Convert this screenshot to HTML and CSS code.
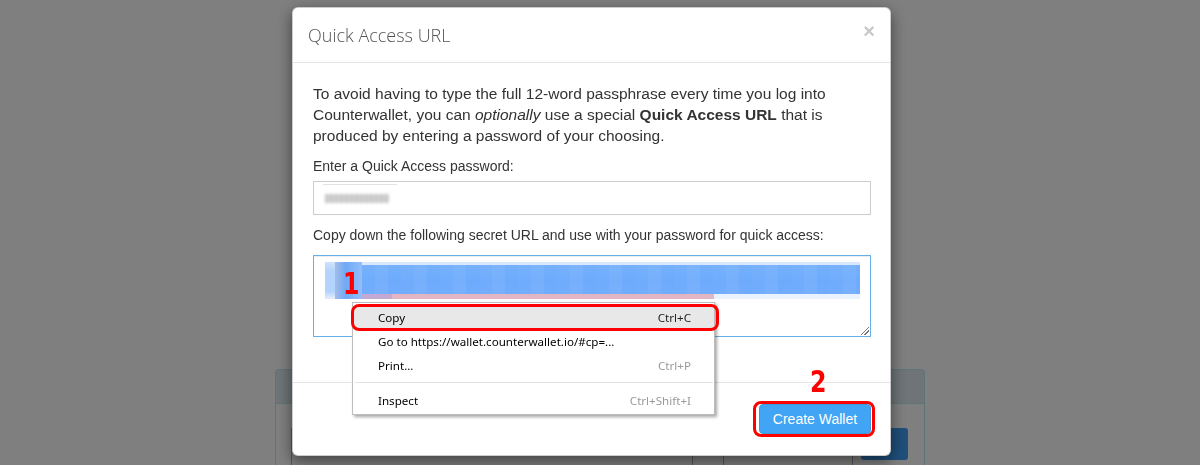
FILE: index.html
```html
<!DOCTYPE html>
<html>
<head>
<meta charset="utf-8">
<title>Quick Access URL</title>
<link rel="stylesheet" href="styles.css">
</head>
<body>
<div class="page">
  <div class="panel">
    <div class="panel-heading"></div>
    <div class="panel-body">
      <div class="bg-input"></div>
      <div class="bg-input bg-input-small"></div>
      <div class="bg-btn"></div>
    </div>
  </div>
</div>

<div class="backdrop"></div>

<div class="modal">
  <div class="modal-header">
    <h4 class="modal-title">Quick Access URL</h4>
    <span class="close">×</span>
  </div>
  <div class="modal-body">
    <p class="intro">To avoid having to type the full 12-word passphrase every time you log into Counterwallet, you can <em>optionally</em> use a special <strong>Quick Access URL</strong> that is produced by entering a password of your choosing.</p>
    <label class="label">Enter a Quick Access password:</label>
    <div class="input">
      <span class="blur-line"></span>
      <span class="blur-dots"></span>
    </div>
    <label class="label label-2">Copy down the following secret URL and use with your password for quick access:</label>
    <div class="textarea">
      <div class="sel">
        <div class="sel-left">
          <span class="cell c1"></span>
          <span class="cell c2"></span>
        </div>
        <div class="sel-main">
          <div class="sel-band"></div>
          <div class="sel-strip">
            <span class="strip-purple"></span>
            <span class="strip-pink"></span>
            <span class="strip-light"></span>
          </div>
        </div>
      </div>
      <span class="grip"></span>
      <span class="marker marker-1">1</span>
    </div>
  </div>
  <div class="modal-footer">
    <span class="marker marker-2">2</span>
    <span class="btn-ring"><button class="btn-primary">Create Wallet</button></span>
  </div>

  <div class="ctx-menu">
    <div class="ctx-item ctx-active"><span>Copy</span><span class="ctx-key-dark">Ctrl+C</span></div>
    <div class="ctx-item"><span>Go to https://wallet.counterwallet.io/#cp=...</span><span></span></div>
    <div class="ctx-item"><span>Print...</span><span class="ctx-key">Ctrl+P</span></div>
    <div class="ctx-sep"></div>
    <div class="ctx-item"><span>Inspect</span><span class="ctx-key">Ctrl+Shift+I</span></div>
    <div class="copy-ring"></div>
  </div>
</div>
</body>
</html>
```

FILE: styles.css
```css
* { box-sizing: border-box; }
html, body { margin: 0; padding: 0; }
body {
  width: 1200px;
  height: 465px;
  overflow: hidden;
  background: #fff;
  font-family: "Liberation Sans", Arial, sans-serif;
  font-size: 14px;
  color: #333;
}

/* background page */
.page {
  padding: 369px 0 0 275px;
}
.panel {
  width: 650px;
  height: 96px;
  border: 1px solid #bce8f1;
  border-bottom: 0;
  border-radius: 4px 4px 0 0;
  background: #fff;
  overflow: hidden;
}
.panel-heading {
  height: 34px;
  background: #dce9ee;
  border-bottom: 1px solid #bce8f1;
  border-radius: 3px 3px 0 0;
}
.panel-body {
  display: flex;
  padding: 24px 16px 0 15px;
}
.bg-input {
  width: 402px;
  height: 40px;
  border: 1px solid #aaa;
  background: #fff;
}
.bg-input-small {
  width: 130px;
  margin-left: 30px;
}
.bg-btn {
  width: 47px;
  height: 32px;
  margin-left: 8px;
  background: #3e9ef4;
  border-radius: 3px;
}

.backdrop {
  position: fixed;
  inset: 0;
  background: rgba(0, 0, 0, 0.5);
}

/* modal */
.modal {
  position: fixed;
  left: 292px;
  top: 7px;
  width: 599px;
  height: 449px;
  background: #fff;
  border: 1px solid rgba(0, 0, 0, .2);
  border-radius: 6px;
  box-shadow: 0 5px 15px rgba(0, 0, 0, .5);
  display: flex;
  flex-direction: column;
}
.modal-header {
  display: flex;
  justify-content: space-between;
  align-items: flex-start;
  height: 55px;
  padding: 15px 15px 0 15px;
  border-bottom: 1px solid #e5e5e5;
}
.modal-title {
  margin: 0;
  font-family: "Open Sans", sans-serif;
  font-weight: 300;
  font-size: 18px;
  line-height: 25px;
  color: #555;
}
.close {
  font-family: "Liberation Sans", Arial, sans-serif;
  font-weight: bold;
  font-size: 20px;
  line-height: 17px;
  color: #c8c8c8;
}
.modal-body {
  padding: 20px 19px 0 20px;
  height: 319px;
  display: flex;
  flex-direction: column;
}
.intro {
  margin: 0 0 10px;
  line-height: 21px;
  font-size: 15.5px;
}
.label {
  display: block;
  line-height: 21px;
  margin-bottom: 4px;
}
.label-2 {
  margin-top: 10px;
  margin-bottom: 9px;
}
.input {
  position: relative;
  height: 34px;
  border: 1px solid #ccc;
}
.blur-line {
  position: absolute;
  left: 9px;
  top: 2px;
  width: 74px;
  height: 1px;
  background: #e2e2e2;
}
.blur-dots {
  position: absolute;
  left: 11px;
  top: 12px;
  width: 64px;
  height: 9px;
  background: repeating-linear-gradient(90deg, #c6c6c6 0 3px, #d6d6d6 3px 5px);
  filter: blur(1.5px);
}
.textarea {
  position: relative;
  height: 82px;
  border: 1px solid #66afe9;
  box-shadow: inset 0 1px 1px rgba(0,0,0,.075);
  padding: 6px 10px 0 11px;
}
.sel {
  display: flex;
  height: 37px;
}
.sel-left {
  display: flex;
  width: 37px;
}
.cell { display: block; height: 100%; }
.c1 { width: 10px; background: linear-gradient(#cfe3fd, #b3d4fc 25%, #b3d4fc 80%, #e6f0fd); }
.c2 { width: 27px; background: linear-gradient(90deg, #a4bde9, #6fa9f5 40%, #93befa); }
.sel-main {
  flex: 1;
  display: flex;
  flex-direction: column;
  padding-top: 3px;
  background: linear-gradient(#d9e8fd, #d9e8fd 3px, transparent 3px);
}
.sel-band {
  height: 29px;
  background:
    repeating-linear-gradient(90deg, rgba(255,255,255,0) 0 13px, rgba(255,255,255,.04) 13px 26px, rgba(60,140,250,.04) 26px 39px),
    linear-gradient(#78b2fc, #70acfc 50%, #73adfd);
}
.sel-strip {
  display: flex;
  height: 5px;
}
.strip-purple { width: 30px; background: #c2a8d3; }
.strip-pink { width: 322px; background: #e3b4c1; }
.strip-light { flex: 1; background: #eaf3fd; }

.grip {
  position: absolute;
  right: 1px;
  bottom: 1px;
  width: 8px;
  height: 8px;
  background: linear-gradient(135deg, transparent 0 45%, #777 45% 52%, transparent 52% 68%, #777 68% 76%, transparent 76%);
}

.marker {
  position: absolute;
  font-family: "DejaVu Sans Condensed", "DejaVu Sans", sans-serif;
  font-weight: bold;
  color: #f00;
  font-size: 31px;
  line-height: 30px;
  transform: scaleX(0.85);
  transform-origin: left top;
}
.marker-1 {
  left: 29px;
  top: 12px;
}
.marker-2 {
  left: 517px;
  top: -17px;
}

.modal-footer {
  position: relative;
  display: flex;
  justify-content: flex-end;
  align-items: flex-start;
  padding: 18px 15px 0 0;
  border-top: 1px solid #e5e5e5;
  flex: 1;
}
.btn-ring {
  display: inline-flex;
  padding: 0 1px 0 3px;
  border: 3px solid #f00;
  border-radius: 8px;
}
.btn-primary {
  width: 112px;
  height: 30px;
  border: 1px solid #3b99e0;
  border-radius: 4px;
  background: #42a4f4;
  color: #fff;
  font-family: "Liberation Sans", Arial, sans-serif;
  font-size: 14px;
  padding: 0;
}

/* context menu */
.ctx-menu {
  position: absolute;
  left: 59px;
  top: 294px;
  width: 363px;
  padding: 3px 0 1px 1px;
  background: #fff;
  border: 1px solid #bdbdbd;
  box-shadow: 2px 2px 3px rgba(0,0,0,.35);
  font-family: "Noto Sans", "Open Sans", sans-serif;
  font-size: 11.6px;
  color: #000;
}
.ctx-item {
  display: flex;
  justify-content: space-between;
  height: 24px;
  line-height: 24px;
  padding: 0 23px 0 24px;
}
.ctx-active { background: #e8e8e8; }
.ctx-key { color: #9a9a9a; }
.ctx-key-dark { color: #222; }
.ctx-sep {
  height: 1px;
  margin: 4px 1px 6px 1px;
  background: #e3e3e3;
}
.copy-ring {
  position: absolute;
  left: -2px;
  top: 1px;
  width: 368px;
  height: 27px;
  border: 3px solid #f00;
  border-radius: 8px;
}
```
